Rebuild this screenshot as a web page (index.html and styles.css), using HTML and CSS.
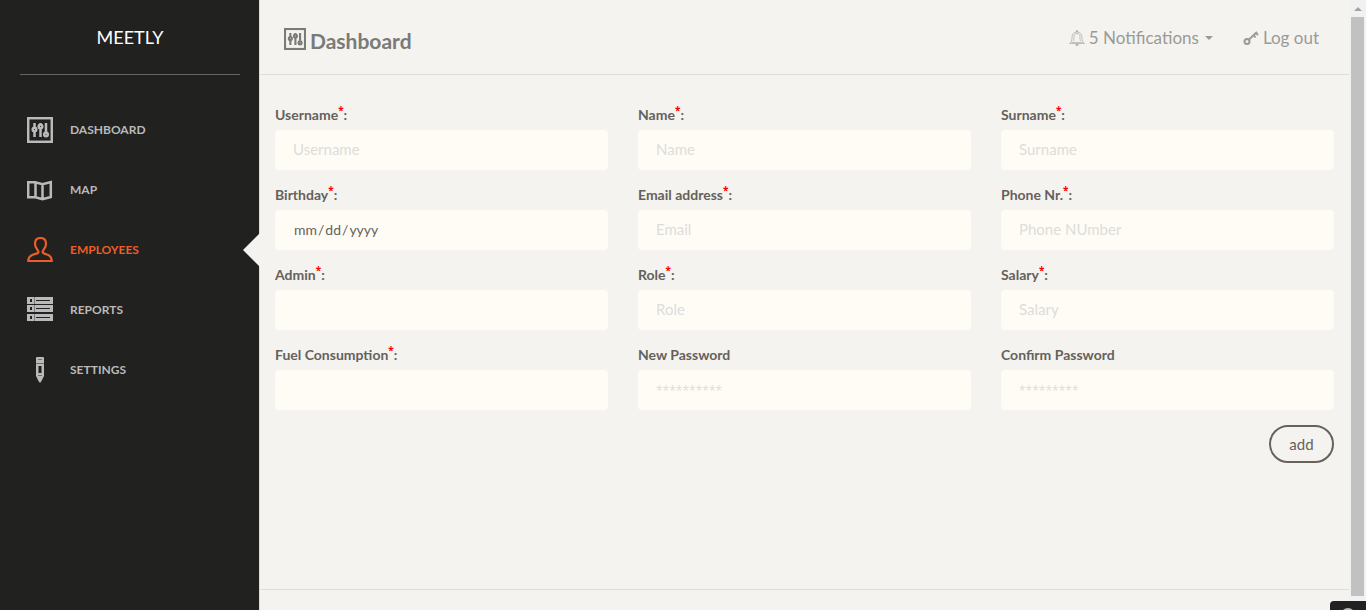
FILE: index.html
```html
<!DOCTYPE html>
<html lang="en">
<head>
<meta charset="utf-8">
<title>Meetly</title>
<link rel="stylesheet" href="styles.css">
</head>
<body>
<svg width="0" height="0" class="sprite" aria-hidden="true">
  <symbol id="panel" viewBox="0 0 26 26">
    <g fill="none" stroke="currentColor" stroke-width="2.500">
      <rect x="1.200" y="1.200" width="23.600" height="23.600"/>
      <path d="M7.500 6v4M7.500 14v6M13.500 6v1M13.500 11v9M19 6v9"/>
      <circle cx="7.500" cy="12.500" r="1.800"/><circle cx="13.500" cy="9.500" r="1.800"/><circle cx="19" cy="17.500" r="1.800"/>
    </g>
  </symbol>
</svg>
<div class="shell">
  <aside class="sidebar">
    <div class="logo"><a href="#">MEETLY</a></div>
    <nav class="nav">
      <a href="#"><svg viewBox="0 0 26 26"><use href="#panel"/></svg>DASHBOARD</a>
      <a href="#"><svg viewBox="0 0 26 26"><path fill="none" stroke="currentColor" stroke-width="2.500" d="M1.200 5.200h7l7.300 2L23.800 5v15l-8.300 2.200-7-2H1.200zM8.500 5v15M15.500 7v15"/></svg>MAP</a>
      <a href="#" class="active"><svg viewBox="0 0 26 26"><path fill="none" stroke="currentColor" stroke-width="2.200" d="M1.300 24c0-4 2.200-5.500 5.200-6.500 3-1 5-1 5-2.500 0-2-3.500-3.500-3.500-8 0-4 2-6 5.500-6s5.500 2 5.500 6c0 4.500-3.500 6-3.500 8 0 1.500 2 1.500 4.500 2.500 3 1 4.700 2.500 4.700 6.500z"/></svg>EMPLOYEES</a>
      <a href="#"><svg viewBox="0 0 26 26"><path fill="currentColor" fill-rule="evenodd" d="M0 0h26v7H0zM3 2v3h2V2zM9 3v1h14V3zM0 8h26v7H0zM3 10v3h2v-3zM9 11v1h14v-1zM0 17h26v7H0zM3 19v3h2v-3zM9 20v1h14v-1z"/><path stroke="#222220" stroke-opacity=".4" d="M7.500 0v24"/></svg>REPORTS</a>
      <a href="#"><svg viewBox="0 0 26 26"><path fill="currentColor" fill-rule="evenodd" d="M10 0h6q1 0 1 1v18l-2.500 5-1.500 2-1.500-2L9 19V1q0-1 1-1zM11.500 9v7h3V9z"/><path stroke="#222220" stroke-opacity=".5" d="M11 2.500h4M9 6.500h8M11 18.500h4"/></svg>SETTINGS</a>
    </nav>
  </aside>
  <main class="main">
    <header class="topbar">
      <a href="#" class="title"><svg viewBox="0 0 26 26"><use href="#panel"/></svg>Dashboard</a>
      <div class="actions">
        <a href="#"><svg class="bell" viewBox="0 0 16 16"><path fill="none" stroke="currentColor" stroke-width=".6" d="M.5 13.500c2-1 2.500-3 2.500-6C3 4 5 2 8 2s5 2 5 5.500c0 3 .5 5 2.500 6zM2.500 12.500h11M4.500 11c.5-2 .5-3 .5-4.500 0-1.500 1-3 3-3s3 1.500 3 3c0 1.500 0 2.500.5 4.500"/><path stroke="currentColor" stroke-width="1.200" d="M7 1.200h2M6.500 14.800h3"/></svg>5 Notifications<span class="caret"></span></a>
        <a href="#"><svg class="key" viewBox="0 0 16 16"><g fill="none" stroke="currentColor" stroke-width="2"><circle cx="4" cy="11.500" r="2.500"/><path d="M6 9.500L14 2M10.500 5l2 2.500M13 3l2 2"/></g></svg>Log out</a>
      </div>
    </header>
    <form class="content">
      <div class="fields">
        <div class="field"><label for="username">Username<sup>*</sup>:</label><input id="username" type="text" placeholder="Username"></div>
        <div class="field"><label for="name">Name<sup>*</sup>:</label><input id="name" type="text" placeholder="Name"></div>
        <div class="field"><label for="surname">Surname<sup>*</sup>:</label><input id="surname" type="text" placeholder="Surname"></div>
        <div class="field"><label for="birthday">Birthday<sup>*</sup>:</label><input id="birthday" type="date"></div>
        <div class="field"><label for="email">Email address<sup>*</sup>:</label><input id="email" type="email" placeholder="Email"></div>
        <div class="field"><label for="phone">Phone Nr.<sup>*</sup>:</label><input id="phone" type="text" placeholder="Phone NUmber"></div>
        <div class="field"><label for="admin">Admin<sup>*</sup>:</label><input id="admin" type="text"></div>
        <div class="field"><label for="role">Role<sup>*</sup>:</label><input id="role" type="text" placeholder="Role"></div>
        <div class="field"><label for="salary">Salary<sup>*</sup>:</label><input id="salary" type="text" placeholder="Salary"></div>
        <div class="field"><label for="fuel">Fuel Consumption<sup>*</sup>:</label><input id="fuel" type="text"></div>
        <div class="field"><label for="password">New Password</label><input id="password" type="password" placeholder="**********"></div>
        <div class="field"><label for="confirm">Confirm Password</label><input id="confirm" type="password" placeholder="*********"></div>
      </div>
      <button type="button" class="add">add</button>
    </form>
    <footer class="footer"></footer>
  </main>
  <div class="scrollbar" aria-hidden="true"><span class="arrow"></span><span class="thumb"></span></div>
</div>
<div class="widget" aria-hidden="true"><span></span></div>
</body>
</html>
```

FILE: styles.css
```css
* { box-sizing: border-box; }
body {
  margin: 0;
  overflow: hidden;
  background: #f4f3ef;
  color: #66615b;
  font: 14px/20px Lato, "Open Sans", sans-serif;
}
a { color: inherit; text-decoration: none; }
.sprite { position: absolute; }
.shell { display: flex; min-height: 100vh; }

.sidebar {
  flex: 0 0 260px;
  background: #212120;
  border-right: 1px solid #dddddb;
}
.logo {
  margin: 0 19px 0 20px;
  padding: 22px 0;
  border-bottom: 1px solid #666664;
  color: #fff;
  font-size: 18px;
  line-height: 30px;
  text-align: center;
}
.nav { padding-top: 25px; }
.nav a {
  position: relative;
  display: flex;
  align-items: center;
  gap: 17px;
  height: 60px;
  padding-left: 27px;
  color: #bababa;
  font-size: 12px;
  font-weight: 700;
}
.nav svg { width: 26px; height: 26px; }
.nav .active { color: #eb5e28; }
.nav .active::after {
  content: "";
  position: absolute;
  right: -1px;
  top: 13px;
  border: 17px solid transparent;
  border-left: 0;
  border-right-color: #f4f3ef;
}

.main { flex: 1; display: flex; flex-direction: column; min-width: 0; }
.topbar {
  display: flex;
  justify-content: space-between;
  height: 75px;
  padding: 2px 30px 0 24px;
  border-bottom: 1px solid #dddddb;
}
.title {
  display: flex;
  align-items: center;
  gap: 4px;
  padding-top: 6px;
  color: #7a7a78;
  font-size: 21px;
  font-weight: 700;
}
.title svg { width: 22px; height: 22px; margin-bottom: 4px; }
.actions { display: flex; gap: 30px; color: #9a9a98; font-size: 17px; }
.actions a { display: flex; align-items: center; gap: 4px; }
.actions svg { width: 16px; height: 16px; }
.caret {
  margin-left: 2px;
  border: 4px solid transparent;
  border-top-color: currentColor;
  border-bottom: 0;
}

.content { flex: 1; padding: 30px 15px; }
.fields { display: grid; grid-template-columns: repeat(3, 1fr); gap: 15px 30px; }
.field { display: flex; flex-direction: column; gap: 5px; }
label { font-weight: 700; }
sup { color: #f00; font-family: "Open Sans", sans-serif; font-size: 10px; line-height: 0; }
input {
  width: 100%;
  height: 40px;
  padding: 0 18px 2px;
  border: 0;
  border-radius: 4px;
  background: #fffcf5;
  color: #66615b;
  font: inherit;
  font-size: 15px;
}
input[type="date"] { padding-bottom: 0; font-size: 14px; }
input::placeholder { color: #dddddb; opacity: 1; }
input[type="password"]::placeholder { font-family: "Open Sans", sans-serif; font-size: 12px; }
input::-webkit-calendar-picker-indicator { display: none; }
.add {
  display: block;
  min-width: 65px;
  height: 38px;
  margin: 15px 0 0 auto;
  border: 2px solid #66615b;
  border-radius: 20px;
  background: transparent;
  color: #66615b;
  font: inherit;
  font-size: 15px;
}
.footer { height: 21px; border-top: 1px solid #dddddb; }

.scrollbar {
  display: flex;
  flex: 0 0 17px;
  flex-direction: column;
  align-items: center;
  padding: 7px 0 14px;
  background: #f1f1f1;
}
.arrow {
  margin-bottom: 6px;
  border: 4px solid transparent;
  border-top: 0;
  border-bottom-color: #a3a3a3;
}
.thumb { flex: 1; width: 13px; background: #c1c1c1; }
.widget {
  position: fixed;
  right: 0;
  bottom: 0;
  display: flex;
  justify-content: center;
  width: 36px;
  height: 9px;
  padding-top: 7px;
  overflow: hidden;
  border-top-left-radius: 4px;
  background: #222;
}
.widget span { flex: 0 0 14px; height: 14px; border-radius: 50%; background: #bbb; }
```
